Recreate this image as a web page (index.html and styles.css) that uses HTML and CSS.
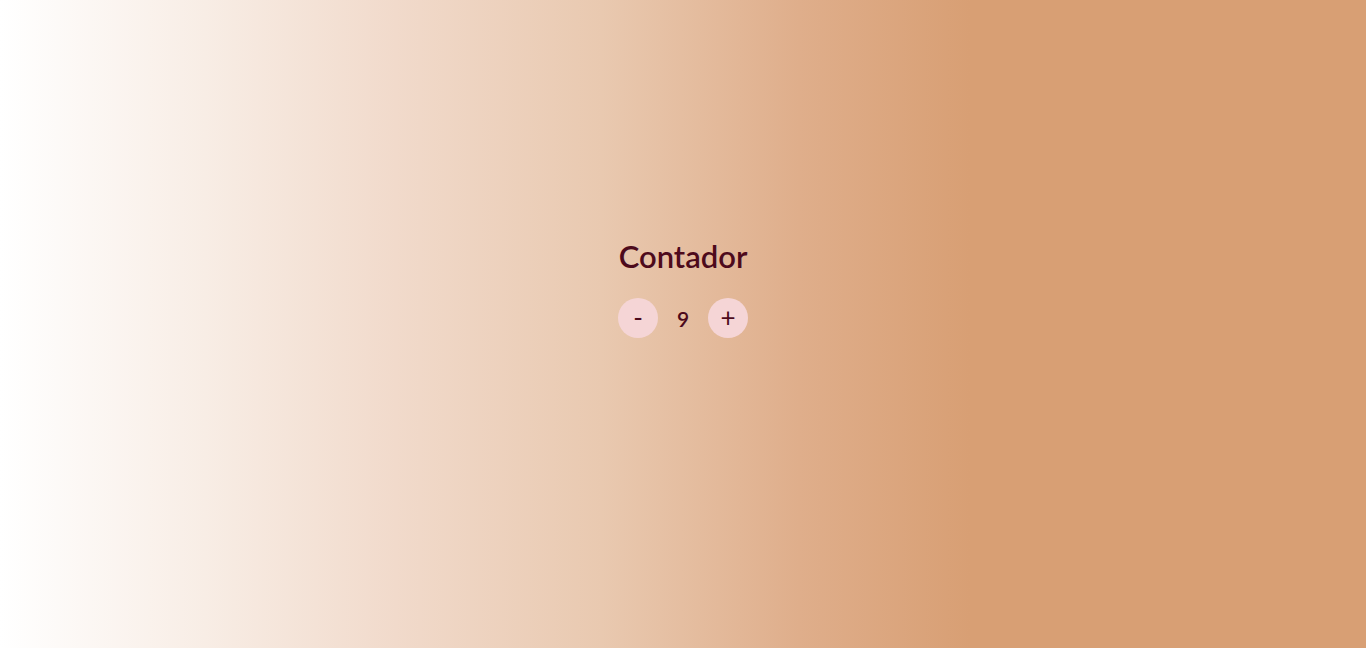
FILE: index.html
```html
<!DOCTYPE html>
<html lang="es">
<head>
<meta charset="utf-8">
<title>Contador</title>
<link rel="stylesheet" href="styles.css">
</head>
<body>
<main class="app">
  <h1 class="title">Contador</h1>
  <div class="counter">
    <button class="btn">-</button>
    <span class="value">9</span>
    <button class="btn">+</button>
  </div>
</main>
</body>
</html>
```
FILE: styles.css
```css
html, body {
  margin: 0;
  height: 100%;
}
body {
  background: linear-gradient(90deg, #ffffff 0%, #f8ede5 15%, #f1dacb 29%, #e9c9b0 44%, #dfae8b 58.5%, #d89f74 71%, #d89f74 100%);
  font-family: Lato, "Open Sans", sans-serif;
  color: #4d0a1c;
}
.app {
  display: flex;
  flex-direction: column;
  align-items: center;
  padding-top: 235px;
}
.title {
  margin: 0;
  font-size: 31px;
  font-weight: 600;
  line-height: 42px;
}
.counter {
  display: flex;
  align-items: center;
  margin-top: 21px;
}
.btn {
  width: 40px;
  height: 40px;
  border: none;
  border-radius: 50%;
  background: #f5d5d6;
  color: #4d0a1c;
  font-family: inherit;
  font-size: 26px;
  font-weight: 400;
  line-height: 1;
  padding: 0 0 2px;
  display: flex;
  align-items: center;
  justify-content: center;
}
.value {
  width: 50px;
  text-align: center;
  font-size: 21px;
  font-weight: 600;
}
```
